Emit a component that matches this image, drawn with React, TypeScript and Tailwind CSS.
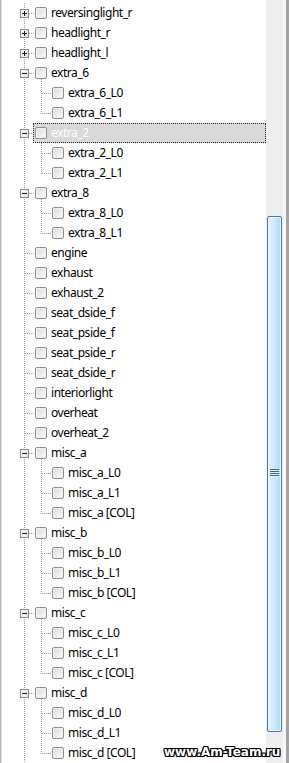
import clsx from "clsx";

type Row = {
    label: string;
    level: 0 | 1;
    box?: "plus" | "minus";
    last?: boolean;
    selected?: boolean;
};

const rows: Row[] = [];

["reversinglight_r", "headlight_r", "headlight_l"].forEach((l) =>
    rows.push({ label: l, level: 0, box: "plus" })
);

const addGroup = (name: string, kids: string[], selected?: boolean) => {
    rows.push({ label: name, level: 0, box: "minus", selected });
    kids.forEach((k, i) => rows.push({ label: k, level: 1, last: i === kids.length - 1 }));
};

addGroup("extra_6", ["extra_6_L0", "extra_6_L1"]);
addGroup("extra_2", ["extra_2_L0", "extra_2_L1"], true);
addGroup("extra_8", ["extra_8_L0", "extra_8_L1"]);

[
    "engine",
    "exhaust",
    "exhaust_2",
    "seat_dside_f",
    "seat_pside_f",
    "seat_pside_r",
    "seat_dside_r",
    "interiorlight",
    "overheat",
    "overheat_2",
].forEach((l) => rows.push({ label: l, level: 0 }));

["a", "b", "c", "d"].forEach((s) =>
    addGroup(`misc_${s}`, [`misc_${s}_L0`, `misc_${s}_L1`, `misc_${s} [COL]`])
);

const dot = {
    stroke: "#a0a0a0",
    strokeWidth: 1,
    strokeDasharray: "1 1",
};

// tree connector lines for one row
const Lines = ({ row }: { row: Row }) => {
    return (
        <svg className="absolute left-0 top-0" width="66" height="20" shapeRendering="crispEdges">
            <line x1="24.5" y1="0" x2="24.5" y2="20" {...dot} />
            {row.level === 0 && !row.box && <line x1="25" y1="10.5" x2="35" y2="10.5" {...dot} />}
            {row.box && (
                <>
                    <line x1="29" y1="10.5" x2="35" y2="10.5" {...dot} />
                    <defs>
                        <linearGradient id="bx" x1="0" y1="0" x2="1" y2="1">
                            <stop offset="0" stopColor="#ffffff" />
                            <stop offset="1" stopColor="#dcdcdc" />
                        </linearGradient>
                    </defs>
                    <rect x="20.5" y="6.5" width="8" height="8" fill="url(#bx)" stroke="#8c8c8c" />
                    <line x1="22" y1="10.5" x2="27" y2="10.5" stroke="#1a1a1a" />
                    {row.box === "plus" && <line x1="24.5" y1="8" x2="24.5" y2="13" stroke="#1a1a1a" />}
                </>
            )}
            {row.box === "minus" && <line x1="41.5" y1="16" x2="41.5" y2="20" {...dot} />}
            {row.level === 1 && (
                <>
                    <line x1="41.5" y1="0" x2="41.5" y2={row.last ? "11" : "20"} {...dot} />
                    <line x1="42" y1="10.5" x2="52" y2="10.5" {...dot} />
                </>
            )}
        </svg>
    );
};

const Checkbox = () => (
    <div className="h-[12px] w-[12px] shrink-0 rounded-[2px] border border-[#8e8f8f] bg-gradient-to-br from-[#dcdcdc] to-[#fbfbfb] shadow-[inset_0_0_0_1px_#f4f4f4]" />
);

const App = () => {
    return (
        <div className="relative flex h-[763px] w-[289px] overflow-hidden bg-white font-['Noto_Sans',sans-serif] text-[12px] tracking-[-0.45px]">
            <div className="h-full w-[266px] pt-[3px] shadow-[inset_1px_0_0_#b9b9b9,inset_2px_0_0_#e3e3e3]">
                {rows.map((r) => (
                    <div key={r.label} className="relative flex h-5 items-center">
                        <Lines row={r} />
                        <div
                            className={clsx(
                                "relative flex h-5 flex-1 items-center border border-dotted pl-[1px]",
                                r.level === 0 ? "ml-[33px]" : "ml-[50px]",
                                r.selected
                                    ? "border-[#202020] bg-[#d9d9d9] text-white"
                                    : "border-transparent text-black"
                            )}
                        >
                            <Checkbox />
                            <span className="ml-[4px] whitespace-nowrap leading-5">{r.label}</span>
                        </div>
                    </div>
                ))}
            </div>

            {/* scrollbar */}
            <div className="flex h-full w-[17px] flex-col bg-[#eeeeee] pt-[216px]">
                <div className="relative mx-[1px] h-[516px] rounded-[2px] border border-[#3c7fb1] bg-gradient-to-r from-[#e3f2fc] via-[#cfe8fa] to-[#aad8f6] shadow-[inset_0_0_0_1px_#eaf6fd]">
                    <svg className="absolute left-[2px] top-[252px]" width="10" height="9" shapeRendering="crispEdges">
                        {[0, 2, 4, 6].map((y) => (
                            <g key={y}>
                                <line x1="0" y1={y + 0.5} x2="9" y2={y + 0.5} stroke="#3b6688" />
                                <line x1="1" y1={y + 1.5} x2="10" y2={y + 1.5} stroke="#e8f4fc" />
                            </g>
                        ))}
                    </svg>
                </div>
            </div>

            <div className="h-full w-[6px] border-l-[3px] border-[#f7f7f7] bg-[#a3a3a3]" />

            <div className="absolute left-[164px] top-[746px] font-['DejaVu_Sans',sans-serif] text-[12px] font-bold leading-none tracking-normal text-white [text-shadow:1px_0_0_#000,-1px_0_0_#000,0_1px_0_#000,0_-1px_0_#000,1px_1px_0_#000,-1px_-1px_0_#000,1px_-1px_0_#000,-1px_1px_0_#000]">
                www.Am-Team.ru
            </div>
        </div>
    );
};

export default App;
